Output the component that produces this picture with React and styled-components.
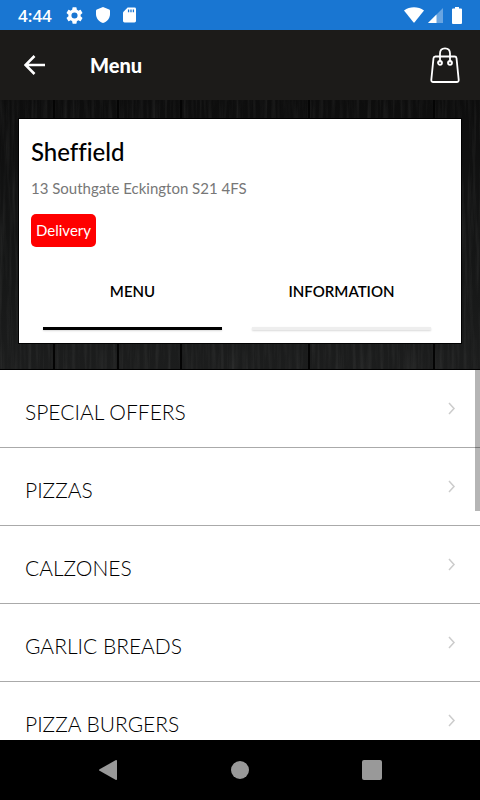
import React, { useState } from "react";
import styled, { createGlobalStyle } from "styled-components";

const GlobalStyle = createGlobalStyle`
  * { box-sizing: border-box; }
  body { margin: 0; background: #000; }
  button { border: 0; padding: 0; background: none; font: inherit; color: inherit; cursor: pointer; }
  h1, h2, p, ul { margin: 0; padding: 0; }
  svg { display: block; }
`;

const Screen = styled.div`
  display: flex;
  flex-direction: column;
  height: 100vh;
  overflow: hidden;
  background: #fff;
  color: #000;
  font-family: Lato, "Liberation Sans", sans-serif;
  font-variant-ligatures: none;
`;

const StatusBar = styled.div`
  display: flex;
  align-items: center;
  justify-content: space-between;
  flex: none;
  height: 30px;
  padding: 0 18px;
  background: #1976d2;
  color: #fff;
`;

const StatusGroup = styled.div`
  display: flex;
  align-items: center;
  gap: ${(p) => p.$gap}px;
`;

const Clock = styled.time`
  font: 600 17px/30px "Open Sans", "Noto Sans", sans-serif;
  padding-top: 2px;
`;

const BatterySlot = styled.span`
  padding-left: 5px;
`;

const Header = styled.header`
  display: flex;
  align-items: center;
  flex: none;
  height: 70px;
  padding: 0 20px;
  background: #1c1b19;
  color: #fff;
`;

const IconButton = styled.button`
  display: flex;
  align-items: center;
  justify-content: center;
  width: 30px;
  height: 40px;
`;

const Title = styled.h1`
  flex: 1;
  padding-left: 40px;
  font-size: 20px;
  line-height: 24px;
  font-weight: 900;
`;

const Hero = styled.section`
  position: relative;
  flex: none;
  padding: 18px 18px 25px;
  border-bottom: 1px solid #000;
  background: #111;
`;

const WoodDrawing = styled.svg`
  position: absolute;
  inset: 0;
  width: 100%;
  height: 100%;
`;

const Card = styled.div`
  position: relative;
  padding: 19px 12px 13px;
  border: 1px solid #000;
  background: #fff;
`;

const Place = styled.h2`
  font-size: 24px;
  line-height: 28px;
  font-weight: 500;
`;

const Address = styled.p`
  margin-top: 10px;
  font-size: 15px;
  line-height: 24px;
  color: #777;
`;

const Badge = styled.span`
  display: inline-block;
  margin-top: 14px;
  padding: 0 5px;
  border-radius: 5px;
  background: #f00;
  color: #fff;
  font-size: 15px;
  line-height: 33px;
`;

const Tabs = styled.div`
  display: flex;
  gap: 30px;
  margin: 32px 18px 0 12px;
`;

const Tab = styled.button`
  flex: 1;
  font-size: 15px;
  line-height: 24px;
  font-weight: 600;

  &::after {
    content: "";
    display: block;
    height: 3px;
    margin-top: 24px;
    background: ${(p) => (p.$active ? "#000" : "#eee")};
    box-shadow: 0 1px 2px rgba(0, 0, 0, 0.15);
  }
`;

const Menu = styled.main`
  position: relative;
  flex: 1;
  min-height: 0;
  overflow: hidden;
`;

const List = styled.ul`
  height: 100%;
  overflow-y: auto;
  scrollbar-width: none;
  list-style: none;
`;

const Row = styled.button`
  display: flex;
  align-items: center;
  justify-content: space-between;
  width: 100%;
  height: 78px;
  padding: 0 24px 0 25px;
  border-bottom: 1px solid #aaa;
  text-align: left;
  color: #000;
`;

const RowLabel = styled.span`
  padding-top: 6px;
  font-size: 21px;
  line-height: 28px;
  font-weight: 300;
`;

const ScrollThumb = styled.div`
  position: absolute;
  top: 0;
  right: 0;
  width: 5px;
  height: 38%;
  background: rgba(0, 0, 0, 0.29);
`;

const NavBar = styled.nav`
  display: flex;
  justify-content: center;
  align-items: center;
  flex: none;
  gap: 92px;
  height: 60px;
  background: #000;
  color: #999;
`;

const NavButton = styled.button`
  display: flex;
  align-items: center;
  justify-content: center;
  width: 40px;
  height: 40px;
`;

const GearIcon = () => (
  <svg width="17" height="17" viewBox="2 2 20 20" fill="currentColor" aria-hidden="true">
    <path d="M19.14 12.94c.04-.3.06-.61.06-.94s-.02-.64-.07-.94l2.03-1.58a.49.49 0 0 0 .12-.61l-1.92-3.32a.49.49 0 0 0-.59-.22l-2.39.96a7 7 0 0 0-1.62-.94l-.36-2.54a.48.48 0 0 0-.48-.41h-3.84a.48.48 0 0 0-.47.41l-.36 2.54c-.59.24-1.13.57-1.62.94l-2.39-.96a.48.48 0 0 0-.59.22L2.74 8.87a.48.48 0 0 0 .12.61l2.03 1.58a6 6 0 0 0 0 1.88l-2.03 1.58a.49.49 0 0 0-.12.61l1.92 3.32c.12.22.37.29.59.22l2.39-.96c.5.38 1.03.7 1.62.94l.36 2.54c.05.24.24.41.48.41h3.84c.24 0 .44-.17.47-.41l.36-2.54c.59-.24 1.13-.56 1.62-.94l2.39.96c.22.08.47 0 .59-.22l1.92-3.32a.48.48 0 0 0-.12-.61zM12 15.6a3.6 3.6 0 1 1 0-7.2 3.6 3.6 0 0 1 0 7.2z" />
  </svg>
);

const ShieldIcon = () => (
  <svg width="14" height="16" viewBox="0 0 14 16" fill="currentColor" aria-hidden="true">
    <path d="M7 0 13.2 2.4Q14 2.8 14 3.6V7C14 11.4 11 15 7 16 3 15 0 11.4 0 7V3.6Q0 2.8.8 2.4Z" />
  </svg>
);

const CardIcon = () => (
  <svg width="13" height="16" viewBox="0 0 14 16" aria-hidden="true">
    <path fill="currentColor" d="M5 0h7.4Q14 0 14 1.6v12.8q0 1.6-1.6 1.6H1.6Q0 16 0 14.4V5Z" />
    <path d="M6 2v3M8.6 2v3M11.2 2v3" stroke="#1976d2" strokeWidth="1.4" />
  </svg>
);

const WifiIcon = () => (
  <svg width="20" height="16" viewBox="0 0 20 16" fill="currentColor" aria-hidden="true">
    <path d="M0 3.4C5.8-.9 14.2-.9 20 3.4L10.6 15.3Q10 16 9.4 15.3Z" />
  </svg>
);

const SignalIcon = () => (
  <svg width="15" height="15" viewBox="0 0 15 15" fill="currentColor" aria-hidden="true">
    <path opacity=".35" d="M15 0v15H0Z" />
    <path d="M8.5 6.5V15H0Z" />
  </svg>
);

const BatteryIcon = () => (
  <svg width="10" height="17" viewBox="0 0 10 17" fill="currentColor" aria-hidden="true">
    <path d="M3 0h4v1.5h2q1 0 1 1V16q0 1-1 1H1q-1 0-1-1V2.5q0-1 1-1h2Z" />
  </svg>
);

const BackIcon = () => (
  <svg width="22" height="20" viewBox="0 0 22 20" fill="none" stroke="currentColor" strokeWidth="2.6" aria-hidden="true">
    <path d="M21 10H2M10.5 1 1.5 10l9 9" />
  </svg>
);

const BagIcon = () => (
  <svg width="30" height="36" viewBox="0 0 30 36" fill="none" stroke="currentColor" strokeWidth="1.8" aria-hidden="true">
    <path d="M5.4 9.5h19.2q1.700 0 1.900 1.700l2.200 21.600q.2 2.200-2 2.200H3.300q-2.200 0-2-2.200l2.200-21.600q.2-1.700 1.900-1.700Z" />
    <path d="M10 15.500V6.500C10 3.300 12 1.300 15 1.300s5 2 5 5.200v9" />
    <circle cx="10" cy="15.800" r="2" />
    <circle cx="20" cy="15.800" r="2" />
  </svg>
);

const ChevronIcon = () => (
  <svg width="9" height="13" viewBox="0 0 9 13" fill="none" stroke="#ccc" strokeWidth="1.5" aria-hidden="true">
    <path d="M2 1l5 5.500L2 12" />
  </svg>
);

const joints = [54, 118, 181, 309, 434];

const Wood = () => (
  <WoodDrawing viewBox="0 0 480 270" preserveAspectRatio="none" aria-hidden="true">
    <defs>
      <linearGradient id="shade" x1="0" y1="0" x2="0" y2="1">
        <stop offset="0" stopColor="#0d0d0d" />
        <stop offset="0.6" stopColor="#151616" />
        <stop offset="1" stopColor="#1c1d1d" />
      </linearGradient>
      <filter id="grain" x="0" y="0" width="1" height="1">
        <feTurbulence type="fractalNoise" baseFrequency="0.25 0.012" numOctaves="4" seed="7" />
        <feColorMatrix values="0 0 0 0 0.3  0 0 0 0 0.3  0 0 0 0 0.29  1.4 0 0 0 -0.6" />
      </filter>
    </defs>
    <rect width="480" height="270" fill="url(#shade)" />
    <rect width="480" height="270" filter="url(#grain)" opacity="0.2" />
    {joints.map((x) => (
      <path key={x} d={`M${x} 0v270`} stroke="#040404" strokeWidth="2" />
    ))}
  </WoodDrawing>
);

const categories = ["SPECIAL OFFERS", "PIZZAS", "CALZONES", "GARLIC BREADS", "PIZZA BURGERS"];
const tabs = ["MENU", "INFORMATION"];

export default function App() {
  const [active, setActive] = useState("MENU");
  return (
    <Screen>
      <GlobalStyle />
      <StatusBar>
        <StatusGroup $gap={14}>
          <Clock>4:44</Clock>
          <StatusGroup $gap={13}>
            <GearIcon />
            <ShieldIcon />
            <CardIcon />
          </StatusGroup>
        </StatusGroup>
        <StatusGroup $gap={4}>
          <WifiIcon />
          <SignalIcon />
          <BatterySlot><BatteryIcon /></BatterySlot>
        </StatusGroup>
      </StatusBar>
      <Header>
        <IconButton aria-label="Back"><BackIcon /></IconButton>
        <Title>Menu</Title>
        <IconButton aria-label="Basket"><BagIcon /></IconButton>
      </Header>
      <Hero>
        <Wood />
        <Card>
          <Place>Sheffield</Place>
          <Address>13 Southgate Eckington S21 4FS</Address>
          <Badge>Delivery</Badge>
          <Tabs role="tablist">
            {tabs.map((name) => (
              <Tab
                key={name}
                role="tab"
                aria-selected={active === name}
                $active={active === name}
                onClick={() => setActive(name)}
              >
                {name}
              </Tab>
            ))}
          </Tabs>
        </Card>
      </Hero>
      <Menu>
        <List>
          {categories.map((name) => (
            <li key={name}>
              <Row>
                <RowLabel>{name}</RowLabel>
                <ChevronIcon />
              </Row>
            </li>
          ))}
        </List>
        <ScrollThumb />
      </Menu>
      <NavBar aria-label="System">
        <NavButton aria-label="Back">
          <svg width="18" height="20" viewBox="0 0 18 20" fill="currentColor" aria-hidden="true">
            <path d="M16.5.3Q18-.4 18 1v18q0 1.4-1.5.7L.6 10.8q-1.2-.8 0-1.6Z" />
          </svg>
        </NavButton>
        <NavButton aria-label="Home">
          <svg width="18" height="18" viewBox="0 0 18 18" fill="currentColor" aria-hidden="true">
            <circle cx="9" cy="9" r="9" />
          </svg>
        </NavButton>
        <NavButton aria-label="Recent apps">
          <svg width="20" height="20" viewBox="0 0 20 20" fill="currentColor" aria-hidden="true">
            <rect width="20" height="20" rx="2" />
          </svg>
        </NavButton>
      </NavBar>
    </Screen>
  );
}
